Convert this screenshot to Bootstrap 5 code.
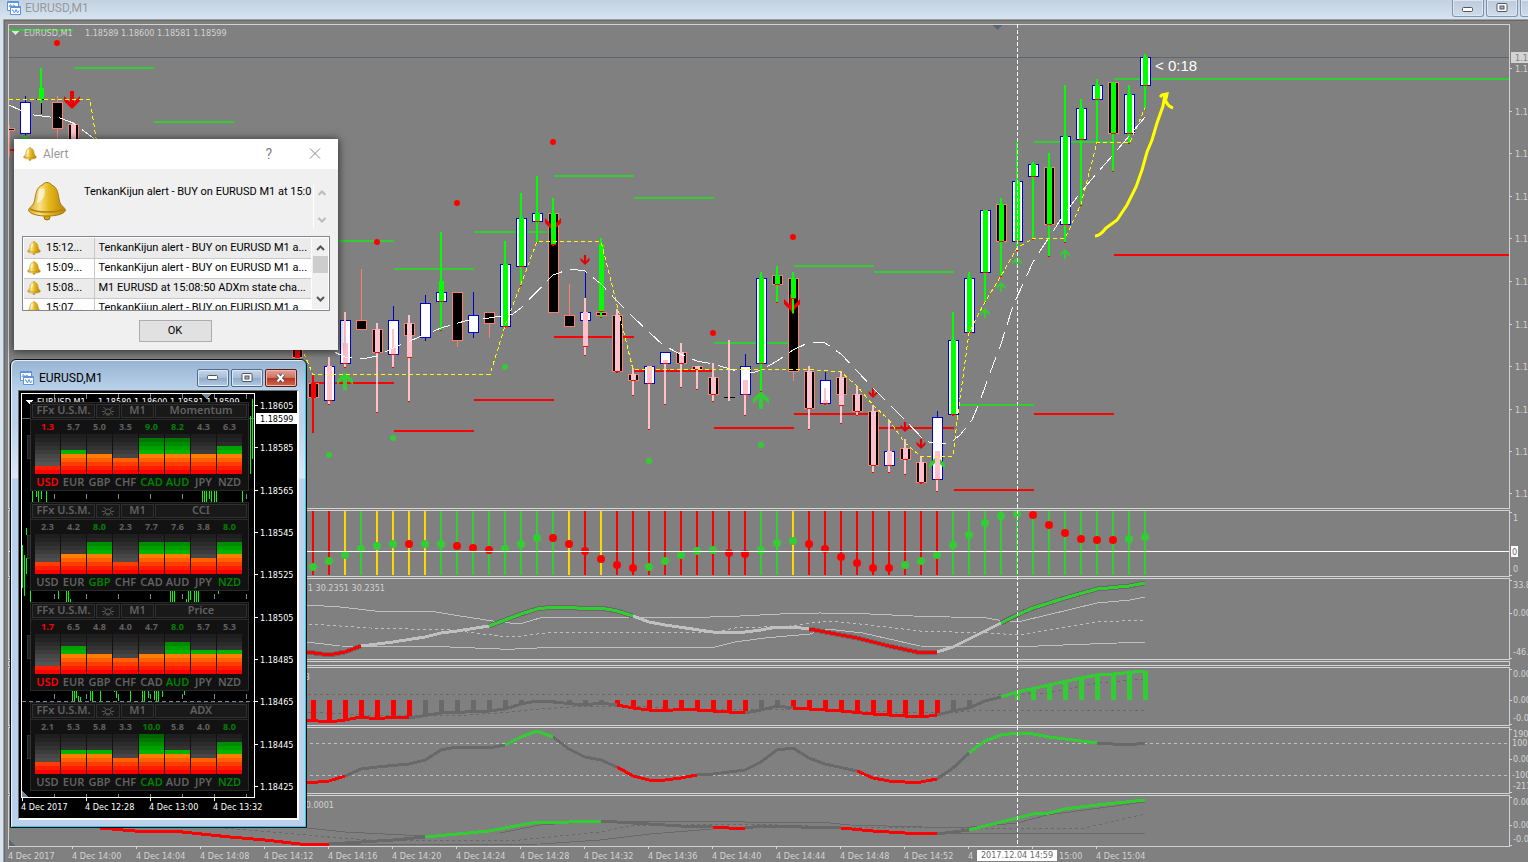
<!DOCTYPE html>
<html lang="en">
<head>
<meta charset="utf-8">
<meta name="viewport" content="width=device-width, initial-scale=1">
<title>EURUSD,M1</title>
<link href="https://cdn.jsdelivr.net/npm/bootstrap@5.3.0/dist/css/bootstrap.min.css" rel="stylesheet">
<style>
body{font-family:Roboto,"Open Sans",sans-serif;font-size:12px;line-height:16px;background:#d6e4f2;overflow:hidden;color:#000}
svg{display:block;flex-shrink:0}
svg text,.tiny{font-family:"DejaVu Sans Condensed","DejaVu Sans",sans-serif;font-size:9px;line-height:12px}
.titlebar{height:20px;background:linear-gradient(#c3d2e0,#d7e4f2);color:#97999c;padding-left:7px}
.titlebar h1,.mini h2{font-size:12px;line-height:16px;font-weight:400;margin:0}
.win-btns{margin-right:-24px;gap:2px}
.wbtn{width:32px;height:17px;padding:0;border:1px solid #8494b0;border-top:0;border-radius:0 0 3px 3px;background:linear-gradient(#bccadb,#cfdcea);box-shadow:inset 0 0 0 1px #dbe6f2;display:flex;align-items:center;justify-content:center}
.client{background:#808080;margin-left:4px;border:1px solid #696969;border-width:1px 0 0 1px;outline:1px solid #a0a0a0;outline-offset:0;padding:3px 0 0 3px;min-height:0}
.pane-row{margin-bottom:1px}
.plotbox{border:1px solid #d3d3d3;min-width:0}
.plotbox svg,.axisbox svg{width:100%;height:100%}
.axisbox{width:18px;flex:none;overflow:hidden}
.h-main{min-height:200px}.h-dots,.h-cci{height:67px}.h-sig{height:82px}.h-thin{height:5px}.h-hist{height:59px}.h-mom{height:52px;margin-bottom:0}
.timeaxis{height:15px;color:#d3d3d3;overflow:hidden}
.timeaxis .tlabel{width:64px;flex:none;border-left:1px solid #d3d3d3;border-image:linear-gradient(#d3d3d3 3px,transparent 3px) 1;white-space:nowrap;padding-top:3px}
.timeaxis .tlabel span{margin-left:-1px}
.timeaxis .part{padding-left:27px}
.crosshair{top:3px;bottom:15px;left:1012px;width:1px;background:repeating-linear-gradient(#fff 0 4px,transparent 4px 6px)}
.crosstag{left:972px;bottom:1px;width:80px;height:11px;line-height:11px;background:#fff;color:#696969;text-align:center}
/* alert dialog */
.alertwin{left:14px;top:139px;width:324px;height:211px;background:#f0f0f0;box-shadow:0 1px 8px 1px rgba(0,0,0,.6);z-index:3}
.alerthead{height:30px;background:#fff;color:#999;padding-left:9px;gap:6px}
.alertwin button{font-size:11px}
.ghost{border:0;background:none;padding:0;color:#808080}
.alertwin .helpbtn{font-size:14px;margin-right:14px}
.tah{font-family:Roboto,"Liberation Sans",sans-serif;font-size:11px;line-height:14px}
.msgicon{margin:-4px 0 0 13px}
.msgtext{margin-left:17px;white-space:nowrap}
.msgscroll{border-left:1px solid #fff;height:43px;width:17px}
.listbox{height:75px;margin:0 8px;border:1px solid #828790;background:#fff;overflow:hidden;padding:1px}
.listbox table{border-collapse:collapse;table-layout:fixed;width:287px}
.listbox td{height:20px;padding:0;border-bottom:1px solid #c8c8c8;white-space:nowrap;overflow:hidden}
.listbox tr:nth-child(odd){background:#ebebeb}
.listbox td:first-child{width:70px;border-right:1px solid #c8c8c8;padding-left:3px}
.listbox td:first-child span{gap:5px}
.listbox td:last-child{padding-left:4px}
.sbar{width:16px;background:#f0f0f0}
.sthumb{height:17px;width:15px;background:#cdcdcd}
.okrow{padding:9px 2px 0 0}
.okbtn{width:73px;height:22px;background:#e1e1e1;border:1px solid #adadad;padding:0}
/* small chart window */
.mini{left:10px;top:359px;width:297px;height:469px;border:1px solid #111;border-radius:6px 6px 0 0;background:linear-gradient(#98b4d2,#b9d1ea 30px,#b9d1ea 60px,#dbe7f5 118px,#b9d1ea 119px,#b9d1ea);box-shadow:inset 1px 1px 0 #e4f0fa,inset -1px -1px 0 #30c8e8;z-index:2;padding:0 7px 7px}
.minihead{height:30px;padding:5px 2px 0;gap:5px}
.mbtns{gap:2px}
.mbtn{width:32px;height:18px;padding:0;border:1px solid #51698a;border-radius:2px;background:linear-gradient(#c5d6e8,#a5bcd6 50%,#8faaca 51%,#b4cbe4);box-shadow:inset 0 0 0 1px #dce8f4;display:flex;align-items:center;justify-content:center}
.mbtn.shut{border-color:#5b1c14;background:linear-gradient(#e0a396,#cf6f5e 50%,#b5331c 51%,#cf6b52);box-shadow:inset 0 0 0 1px #e8b8ac}
.miniclient{background:#000;border:1px solid #696969;border-right:2px solid #fff;border-bottom:2px solid #fff;height:430px;width:281px}
.panels{left:11px;top:11px;width:219px;gap:11px;display:flex;flex-direction:column}
.ffx{height:89px;border:1px solid #2a2a2a;background:#121212;position:relative}
.ffx::before{content:"";position:absolute;left:-4px;top:32px;width:4px;height:24px;background:#1e1e1e;border:1px solid #333}
.ffx{font-family:"Noto Sans",sans-serif;font-size:11px;font-weight:600;line-height:13px;color:#606060}
.fhead{border-bottom:1px solid #2a2a2a;height:17px;padding:1px;gap:1px;display:flex}
.fhead span{border:1px solid #303030;background:#191919;height:14px;line-height:10px;text-align:center;white-space:nowrap}
.f1{width:63px}.f2{width:24px;display:flex;align-items:center;justify-content:center}.f3{width:33px}
.frow{display:flex;gap:1px;padding-left:4px}
.frow>*{width:25px;text-align:center}
.vals{height:14px;font-size:9px;font-weight:700;line-height:14px}
.meter{height:40px;position:relative;background:linear-gradient(#1e1e1e 4px,#232323 4px 8px,#2b2b2b 8px 12px,#333 12px 16px,#3c3c3c 16px 20px,#464646 20px 24px,#4d4d4d 24px 28px,#555 28px 32px,#5f5f5f 32px 36px,#646464 36px)}
.meter i{position:absolute;left:0;right:0;bottom:0;background:linear-gradient(#006400 4px,#007800 4px 8px,#008c00 8px 12px,#00a000 12px 16px,#00b400 16px 20px,#ff7d00 20px 24px,#ff5f00 24px 28px,#ff3c00 28px 32px,#ff1e00 32px 36px,#f00 36px) bottom/100% 40px no-repeat}
.curs span{line-height:15px;white-space:nowrap}
.ffx .lo{color:#f00}.ffx .hi{color:#008000}
</style>
<script src="https://cdn.jsdelivr.net/npm/bootstrap@5.3.0/dist/js/bootstrap.bundle.min.js"></script>
</head>
<body>
<svg width="0" height="0" class="position-absolute" aria-hidden="true">
<defs>
<linearGradient id="gold"><stop offset="0" stop-color="#d9a520"/><stop offset=".3" stop-color="#f7e38a"/><stop offset=".55" stop-color="#e5b91c"/><stop offset="1" stop-color="#b98306"/></linearGradient>
<symbol id="bell" viewBox="0 0 40 40"><circle cx="20" cy="36" r="3" fill="#d9a514" stroke="#9a6c06"/><path d="M20 1.500c-2 0-4 1-4.500 2.500C9 6.500 9 13 7.500 20 6.500 25 1.500 26.500 1.500 29.500c2 4 10 5.500 18.500 5.500s16.500-1.500 18.500-5.500c0-3-5-4.500-6-9.500C31 13 31 6.500 24.500 4 24 2.500 22 1.500 20 1.500Z" fill="url(#gold)" stroke="#a87a10"/><path d="M3 28c7 4 27 4 34 0" fill="none" stroke="#b48510" stroke-width="1.500"/><path d="M13 8c-2 4-2 10-3 14 3-1 5-3 7-6 1-4 1-7 0-9Z" fill="#fff" opacity=".6"/></symbol>
<symbol id="chartico" viewBox="0 0 14 14"><path d="M.500 .500h11v9H.500Z" fill="#fff" stroke="#5d94dd"/><path d="M.500 1h11" stroke="#5d94dd" stroke-width="2"/><path d="M2 6l1.500-2.500L5 6l1.500-2 1.500 1" fill="none" stroke="#5d94dd"/><path d="M3.500 5.500h10v8h-10Z" fill="#fff" stroke="#5d94dd"/><path d="M3.500 6h10" stroke="#5d94dd" stroke-width="2"/><path d="M5 9l1 0 1.500 3 1.500-3.500 1.500 3.500 1.500-2.500" fill="none" stroke="#5d94dd"/></symbol>
<symbol id="sun" viewBox="0 0 14 10"><path d="M4 5.500a3 2.500 0 1 0 6 0 3 2.500 0 1 0-6 0M1 5.500h2.500M10.500 5.500H13M2.500 1l2.500 2.500M11.500 1L9 3.500M2 9l2.500-2M12 9l-2.500-2M5 9h4" fill="none" stroke="#5a5a5a"/></symbol>
<symbol id="minim" viewBox="0 0 12 6"><rect x=".500" y=".500" width="10" height="4" rx="1" fill="#fff" stroke="#505560"/></symbol>
<symbol id="maxim" viewBox="0 0 12 10"><rect x="1" y=".500" width="10" height="8" rx="1" fill="#fff" stroke="#505560"/><rect x="4" y="3" width="4" height="3" fill="#9fb4cc" stroke="#505560"/></symbol>
</defs>
</svg>

<main class="d-flex flex-column vh-100 position-relative">
  <header class="titlebar d-flex justify-content-between flex-shrink-0">
    <div class="d-flex align-items-center"><svg width="14" height="14" class="mb-1"><use href="#chartico"/></svg><h1 class="ms-1 mb-1">EURUSD,M1</h1></div>
    <div class="win-btns d-flex">
      <button class="wbtn" aria-label="Minimize"><svg width="12" height="6" class="mt-1"><use href="#minim"/></svg></button>
      <button class="wbtn" aria-label="Restore"><svg width="12" height="10"><use href="#maxim"/></svg></button>
      <button class="wbtn" aria-label="Close"></button>
    </div>
  </header>

  <section class="client flex-grow-1 d-flex flex-column position-relative">
    <div class="pane-row d-flex flex-grow-1 h-main"><div class="plotbox flex-grow-1"><svg id="p-main"></svg></div><div class="axisbox"><svg id="a-main"></svg></div></div>
    <div class="pane-row d-flex h-dots"><div class="plotbox flex-grow-1"><svg id="p-dots"></svg></div><div class="axisbox"><svg id="a-dots"></svg></div></div>
    <div class="pane-row d-flex h-sig"><div class="plotbox flex-grow-1"><svg id="p-sig"></svg></div><div class="axisbox"><svg id="a-sig"></svg></div></div>
    <div class="pane-row d-flex h-thin"><div class="plotbox flex-grow-1"></div><div class="axisbox"></div></div>
    <div class="pane-row d-flex h-hist"><div class="plotbox flex-grow-1"><svg id="p-hist"></svg></div><div class="axisbox"><svg id="a-hist"></svg></div></div>
    <div class="pane-row d-flex h-cci"><div class="plotbox flex-grow-1"><svg id="p-cci"></svg></div><div class="axisbox"><svg id="a-cci"></svg></div></div>
    <div class="pane-row d-flex h-mom"><div class="plotbox flex-grow-1"><svg id="p-mom"></svg></div><div class="axisbox"><svg id="a-mom"></svg></div></div>
    <div class="timeaxis tiny d-flex" id="times"></div>
    <div class="crosshair position-absolute"></div>
    <div class="crosstag tiny position-absolute">2017.12.04 14:59</div>
  </section>

  <section class="alertwin position-absolute" role="dialog" aria-labelledby="alert-title">
    <div class="alerthead d-flex align-items-center">
      <svg width="14" height="14"><use href="#bell"/></svg><span id="alert-title" class="flex-grow-1">Alert</span>
      <button class="ghost helpbtn" aria-label="Help">?</button>
      <button class="ghost mx-3" aria-label="Close"><svg width="14" height="12" viewBox="0 0 14 12"><path d="M2 .500l10 10M12 .500l-10 10" stroke="#888" fill="none"/></svg></button>
    </div>
    <div class="d-flex pt-3 mb-2">
      <svg width="40" height="40" class="msgicon"><use href="#bell"/></svg>
      <div class="tah msgtext flex-grow-1">TenkanKijun alert - BUY on EURUSD M1 at 15:0</div>
      <div class="msgscroll me-2 d-flex flex-column flex-shrink-0 justify-content-between align-items-center py-1"><svg width="10" height="8"><path d="M1.500 6L5 2.500 8.500 6" fill="none" stroke="#bbb" stroke-width="2"/></svg><svg width="10" height="8"><path d="M1.500 2L5 5.500 8.500 2" fill="none" stroke="#bbb" stroke-width="2"/></svg></div>
    </div>
    <div class="listbox d-flex">
      <table class="tah"><tbody id="alerts"></tbody></table>
      <div class="sbar d-flex flex-column align-items-center justify-content-between py-1 ms-auto">
        <div><svg width="15" height="14"><path d="M4 8L7.500 4.500 11 8" fill="none" stroke="#555" stroke-width="2"/></svg><div class="sthumb"></div></div>
        <svg width="15" height="11"><path d="M4 3L7.500 6.500 11 3" fill="none" stroke="#555" stroke-width="2"/></svg>
      </div>
    </div>
    <div class="text-center okrow"><button class="okbtn tah">OK</button></div>
  </section>

  <section class="mini position-absolute">
    <div class="minihead d-flex align-items-center">
      <svg width="14" height="14"><use href="#chartico"/></svg><h2 class="flex-grow-1">EURUSD,M1</h2>
      <div class="d-flex mbtns">
      <button class="mbtn" aria-label="Minimize"><svg width="12" height="6"><use href="#minim"/></svg></button>
      <button class="mbtn" aria-label="Restore"><svg width="12" height="10"><use href="#maxim"/></svg></button>
      <button class="mbtn shut" aria-label="Close"><svg width="12" height="10"><path d="M2.500 1.500l6 7M8.500 1.500l-6 7" stroke="#505560" stroke-width="4"/><path d="M2.500 1.500l6 7M8.500 1.500l-6 7" stroke="#fff" stroke-width="2"/></svg></button>
      </div>
    </div>
    <div class="miniclient position-relative">
      <svg id="minichart" width="278" height="427"></svg>
      <div class="panels position-absolute" id="panels"></div>
    </div>
  </section>
</main>

<script>
const RED='#ff0000',GRN='#32cd32',LIME='#00ff00',PINK='#ffc0cb',DIM='#696969',SIL='#c0c0c0',AX='#d3d3d3';
const rect=(x,y,w,h,f,s)=>`<rect x="${x}" y="${y}" width="${w}" height="${h}" fill="${f}"${s?` stroke="${s}"`:''}/>`;
const pl=(p,c,w=1,d='')=>`<polyline points="${p}" fill="none" stroke="${c}" stroke-width="${w}"${d?` stroke-dasharray="${d}"`:''}/>`;
const txt=(x,y,t,f=AX,a='start')=>`<text x="${x}" y="${y}" fill="${f}" text-anchor="${a}">${t}</text>`;
const put=(id,x,y,s)=>document.getElementById(id).innerHTML=`<g transform="translate(${-x},${-y})" shape-rendering="crispEdges">${s}</g>`;
const X=i=>25+16*i;

// [x, body style, body top, body bottom, wick top, wick bottom, overlay colour, thick top, thick bottom, thin top, thin bottom]
const candles=[
[9,'k',128,131,125,157],[25,'w',102,134,96,137],[57,'k',102,129,96,139],[73,'k',124,160,124,160,'p',124,160,122,160],
[297,'k',330,358,330,358,'r',330,358,330,358],[313,'k',383,398,383,398,'r',383,398,374,433],
[329,'w',366,401,366,401,'p',366,401,357,405],[345,'w',320,364,320,364,'p',343,364,312,368],[361,'k',320,330,269,330],
[377,'k',329,353,329,353,'p',329,353,323,413],[393,'w',320,355,306,355,'p',348,355,329,368],[409,'k',323,336,323,336,'p',323,358,315,402],
[425,'w',303,338,295,341],[441,'w',292,302,292,302,'g',281,302,232,331],[457,'k',292,341,292,347],[473,'w',315,333,292,338],[489,'k',312,324,312,338],
[505,'w',264,327,264,327,'g',264,327,241,328],[521,'w',218,267,218,267,'g',218,267,193,286],[537,'w',213,222,213,222,'g',213,222,176,243],
[553,'k',213,313,213,313,'g',213,245,198,246],[569,'k',315,327,284,327],[585,'w',312,321,272,321,'p',312,347,298,356],[601,'k',312,316,312,316,'g',244,312,238,318],
[617,'k',315,372,315,372,'p',315,372,309,373],[633,'k',374,381,374,381,'p',374,381,368,396],[649,'w',366,384,366,384,'p',366,384,366,430],
[665,'w',352,364,352,364,'p',360,364,360,405],[681,'k',352,364,352,364,'p',352,364,343,388],[697,'k',366,370,366,370,'p',366,370,366,390],
[713,'k',377,395,377,395,'p',377,395,363,402],[745,'w',366,395,354,395,'p',380,395,380,416],[761,'w',278,364,278,364,'g',278,364,272,392],
[777,'k',275,285,275,285,'g',275,285,266,303],[793,'k',278,372,278,381,'g',278,299,272,314],[809,'k',371,409,371,409,'p',371,409,366,430],
[825,'w',380,404,372,404,'p',400,404,388,405],[841,'k',377,395,377,395,'p',377,406,371,424],[857,'k',394,412,394,412,'p',394,412,386,416],
[873,'k',411,466,411,466,'p',411,466,405,473],[889,'w',451,466,451,466,'p',451,466,420,473],[905,'k',448,460,448,460,'p',448,460,439,475],
[921,'k',462,483,462,483,'p',462,483,456,484],[937,'w',417,480,411,480,'p',451,480,451,492],[953,'w',340,415,340,415,'g',340,415,312,416],
[969,'w',278,333,278,333,'g',278,333,272,333],[985,'w',210,273,210,273,'g',210,273,210,303],[1001,'k',204,242,204,242,'g',204,242,198,277],
[1017,'w',181,242,181,242,'g',181,242,142,251],[1033,'w',164,177,164,177,'g',164,177,162,240],[1049,'k',167,225,167,225,'g',167,225,153,257],
[1065,'w',136,225,136,225,'g',136,225,85,243],[1081,'w',108,140,108,140,'g',108,140,99,206],[1097,'w',85,100,85,100,'g',85,100,79,144],
[1113,'k',82,134,82,134,'g',82,134,82,172],[1129,'w',94,134,94,134,'g',94,134,85,144],[1145,'w',57,86,57,86,'g',57,86,54,110]];
const OV={g:LIME,p:PINK,r:RED};
const levels=[[9,73,30,1],[74,154,68,1],[154,234,122,1],[234,394,241,1],[394,474,269,1],[474,547,232,1],[554,634,176,1],[634,714,198,1],[714,789,343,1],[794,874,266,1],[874,954,272,1],[960,1034,405,1],[1034,1114,142,1],[1114,4000,79,1],
[9,14,150,0],[313,394,383,0],[394,474,431,0],[474,554,400,0],[554,634,337,0],[634,714,371,0],[714,794,428,0],[794,874,414,0],[874,954,428,0],[954,1034,490,0],[1034,1114,414,0],[1114,4000,255,0]];
const arrow=(x,y,c,dir,big)=>{const k=big?1:.56;return `<path transform="translate(${x},${y}) scale(${k},${dir*k})" d="M-2-9h4v11l6-6v5L0 9-8 1v-5l6 6Z" fill="${c}" shape-rendering="auto"/>`};

let s=rect(9,57,4000,1,'#5a6672');
levels.forEach(([a,b,y,g])=>s+=rect(a,y-1,b-a,2,g?GRN:RED));
candles.forEach(([x,t,bt,bb,wt,wb])=>{
  const st=t=='w'?'#0000cd':'#fa8072';
  s+=rect(x,wt,1,wb-wt,st)+rect(x-4.5,bt+.5,10,bb-bt-1,t=='w'?'#fff':'#000',st);
});
[[72,100],[553,222],[792,303]].forEach(p=>s+=arrow(...p,'#f00000',1,1));
[[345,381],[761,400],[937,465],[25,144]].forEach(p=>s+=arrow(...p,GRN,-1,1));
s+=rect(36,99,10,1,'#000')+rect(41,103,1,11,'#000')+rect(40,68,2,35,LIME)+rect(39,88,5,11,LIME);
s+=rect(724,397,11,1,'#000')+rect(728,340,2,61,PINK);
candles.forEach(([x,t,bt,bb,wt,wb,o,kt,kb,nt,nb])=>{
  if(o)s+=rect(x-1,nt,2,nb-nt,OV[o])+rect(x-2,kt,5,kb-kt,OV[o])+rect(x-2,kb-1,5,1,RED)+rect(x-1,nb-1,2,1,RED);
});
[[585,260],[873,393],[905,427],[921,444]].forEach(p=>s+=arrow(...p,'#e60000',1,0));
[[985,313],[1001,287],[1017,262],[1065,254]].forEach(p=>s+=arrow(...p,GRN,-1,0));
[[57,43],[377,242],[457,203],[553,142],[713,333],[793,237]].forEach(([x,y])=>s+=`<circle cx="${x}" cy="${y}" r="3" fill="${RED}" shape-rendering="auto"/>`);
[[329,455],[393,438],[505,367],[649,461],[761,445]].forEach(([x,y])=>s+=`<circle cx="${x}" cy="${y}" r="3" fill="${GRN}" shape-rendering="auto"/>`);
s+=pl('9,99.5 90,99.5 96,138 200,240 303,351 313,374.5 490,374.5 505,326 521,284 537,241.5 601,241.5 617,305 633,369.5 809,369.5 841,372 857,386 873,405 889,420 905,443 921,456.5 953,456.5 958,413 969,333 977,317 985,302 1001,276 1017,248 1033,238.5 1065,238.5 1081,204 1097,142.5 1130,142.5 1145,108','#ffff00',1,'4 3');
s+=pl('9,105 20,110 34,115 50,117 60,118 73,123 92,137 200,240 330,350 345,357 362,359 377,356 393,348 417,338 441,328 465,321 489,318 513,314 521,308 553,275 570,269 585,271 601,284 617,301 633,317 650,333 663,345 680,354 697,361 713,364 737,371 752,373 761,370 777,361 793,350 810,342 825,343 841,354 873,388 905,420 925,441 937,444 950,443 960,435 972,420 980,401 990,373 1001,344 1012,309 1017,297 1033,262 1044,245 1065,213 1081,192 1097,173 1113,155 1129,136 1145,117','#fff',1,'18 8');
s+='<path d="M1095 236q5 0 11-8l11-8 10-15 9-18 6-17 5-18 5-12 5-17 6-17 2-12M1160 97l2-2 5-1-1 5M1165 99q2 7 8 9" fill="none" stroke="#ff0" stroke-width="3" shape-rendering="auto"/>';
s+='<path d="M993 25h9l-4.500 5Z" fill="#5a6672"/><path d="M11 31h8l-4 4Z" fill="#e0e0e0"/>';
s+=txt(24,36,'EURUSD,M1')+txt(85,36,'1.18589 1.18600 1.18581 1.18599')+'<text x="1155" y="71" fill="#fff" style="font:15px \'Liberation Sans\',sans-serif">&lt; 0:18</text>';
put('p-main',9,25,s);

// indicator pane: coloured bars with dots
const bar='rrygyyyyggggggggyryrrrrrrrrrggyrrrrrrrrrggggggggggggg';
const dy=[567,561,555,549,546,544,544,544,544,546,548,550,549,544,538,538,544,551,559,565,568,567,561,555,551,550,553,554,550,543,541,544,549,557,563,568,568,565,561,555,545,535,523,516,514,515,525,533,539,540,540,539,537];
const dc='ggggggrggrrrgggrrrrrrgggggrrgggrrrrrrggggggggrrrrrrgg';
s='';
dy.forEach((y,i)=>{const x=X(i+18);s+=rect(x-1,511,2,64,{r:RED,y:'#ffd700',g:GRN}[bar[i]])+`<circle cx="${x}" cy="${y}" r="4" fill="${dc[i]=='g'?GRN:RED}" shape-rendering="auto"/>`});
put('p-dots',9,511,s+rect(9,551,4000,1,'#fff'));

// trend pane
s=pl('307,605 340,607 375,611 430,611 460,616 493,621 510,623 523,623 540,618 550,617 710,617 740,616 780,614 820,613 870,614 913,616 987,618 1003,621 1018,622 1047,615 1097,603 1130,600 1145,597',SIL)
+pl('307,642 340,646 450,647 500,649 515,649 560,647 715,647 735,642 765,638 810,634 827,629 863,633 920,646 1013,647 1063,645 1145,642',SIL)
+pl('309,624 370,628 450,630 500,636 513,637 545,633 715,632 735,628 790,626 827,621 860,624 920,631 990,633 1018,635 1047,630 1097,622 1145,620',SIL,1,'3 3');
[['307,652 329,655 345,652 361,646',RED],['489,626 521,614 537,609 553,607 569,607 585,609 601,608 617,611 633,616',GRN],['809,629 825,632 857,638 889,646 921,653 937,652',RED],['1001,623 1017,615 1033,608 1065,598 1097,589 1129,586 1145,583',GRN]].forEach(([p,c])=>s+=pl(p,DIM,5)+pl(p,c,3));
['361,646 393,642 425,637 441,633 457,631 489,626','633,616 649,622 665,625 713,632 745,632 761,630 777,627 793,627 809,629','937,652 953,647 969,639 1001,623'].forEach(p=>s+=pl(p,SIL,3));
put('p-sig',9,579,s+txt(385,591,'30.2351 30.2351 30.2351',AX,'end'));

const segs=a=>a.map(([p,c])=>pl(p,c,3)).join('');
// histogram pane
const hist=[['307,720 329,722 345,720 361,717 377,719 393,717 409,718',RED],['409,718 441,713 489,711 505,709 521,704 537,701 553,702 585,705 601,703 617,705',DIM],['617,705 633,708 649,710 665,711 681,709 713,711 729,712 745,713',RED],['745,713 761,710 777,706 793,708',DIM],['793,708 809,709 841,711 873,714 905,716 921,717 937,715',RED],['937,715 953,711 969,708 985,701 1001,697',DIM],['1001,697 1017,692 1049,685 1081,678 1097,675 1113,674 1145,671',GRN]];
s=pl('308,694.5 1018,694.5 1047,693 1097,683 1145,679',DIM,1,'3 3')+pl('308,712 360,715 450,716 500,713 540,709 585,706 633,706 680,709 780,709 860,711 930,713 960,712 980,710 1145,710',DIM,1,'3 3');
const pts=hist.flatMap(h=>h[0].split(' ').map(p=>p.split(',').map(Number)));
for(let i=18;i<=70;i++){const x=X(i);if(x==985||x==1001)continue;
  const k=pts.findIndex(p=>p[0]>=x),b=pts[k],a=pts[Math.max(k-1,0)],y=b[0]==a[0]?b[1]:Math.round(a[1]+(b[1]-a[1])*(x-a[0])/(b[0]-a[0]));
  const c=x>1001?GRN:(x<410||(x>610&&x<750)||(x>790&&x<940))?RED:DIM;
  s+=rect(x-2,Math.min(y,700),5,Math.abs(y-700),c)}
put('p-hist',9,668,s+segs(hist)+txt(310,680,'3',AX,'end'));

put('p-cci',9,728,pl('10,743.5 4000,743.5',SIL,1,'3 3')+pl('10,775.5 4000,775.5',SIL,1,'3 3')+segs([
['307,783 329,781 345,776',RED],['345,776 361,769 377,767 409,764 425,760 441,750 457,747 489,748 505,745',DIM],['505,745 521,737 537,731 553,737',GRN],['553,737 569,749 585,757 601,760 617,767',DIM],['617,767 633,776 649,780 665,780 681,778 697,775',RED],['697,775 713,774 745,770 761,762 777,750 793,748 809,758 825,764 857,771',DIM],['857,771 873,778 889,781 905,782 921,782 937,779',RED],['937,779 953,768 969,753',DIM],['969,753 985,741 1001,735 1017,733 1033,734 1049,737 1081,741 1097,743',GRN],['1097,743 1129,745 1145,743',DIM]]));

put('p-mom',9,796,pl('307,828 345,832 425,836',DIM)+pl('340,845 540,844 600,840 650,834 713,829',DIM)+pl('500,833 540,825 601,821 745,822 820,822 850,825 960,828 1017,823 1047,815 1145,802',DIM)+pl('953,833 1145,833',DIM)
+pl('225,828 340,838 370,840 520,840 600,832 630,826 745,824 840,827 1080,829 1145,814',DIM,1,'3 3')+segs([
['100,828 135,831 173,831 230,837 265,840 300,844 329,844',RED],['329,844 393,840 425,837',DIM],['425,837 457,834 489,831 505,828 521,825 537,822 569,822 601,821',GRN],['601,821 633,823 681,826 713,827',DIM],['713,827 729,828 745,828',RED],['745,828 761,826 841,828',DIM],['841,828 873,831 905,833 937,834',RED],['937,834 969,830',DIM],['969,830 985,826 1001,822 1017,818 1033,814 1049,813 1065,809 1097,805 1145,800',GRN]])
+'<path d="M9 840l6 6H9Z" fill="#5a6672"/>'+txt(334,808,'0.0001',AX,'end'));

// value scales
const scale=(id,top,ticks,labels)=>put(id,1510,top,ticks.map(y=>rect(1510,y,2,1,AX)).join('')+labels.map(([y,t,x=1513])=>txt(x,y+3,t)).join(''));
const py=[68,111,153,196,238,281,324,366,409,451,493];
scale('a-main',24,py,py.map(y=>[y+1,'1.1',1515]));
document.querySelector('#a-main g').innerHTML+=rect(1511,52,17,11,AX)+txt(1515,61,'1.1','#808080');
scale('a-dots',510,[512,575],[[518,'1'],[569,'0']]);
document.querySelector('#a-dots g').innerHTML+=rect(1511,546,7,11,'#fff')+txt(1512,555,'0','#696969');
scale('a-sig',578,[580,613,658],[[585,'33.8'],[613,'0.00'],[652,'-46.']]);
scale('a-hist',667,[669,700,724],[[674,'0.00'],[700,'0.00'],[718,'-0.0']]);
scale('a-cci',727,[729,759,792],[[734,'190'],[743,'100',1512],[759,'0.00'],[775,'-100',1512],[786,'-211']]);
scale('a-mom',795,[797,825,845],[[802,'0.00'],[825,'0.00'],[839,'-0.0']]);

document.getElementById('times').innerHTML=['2017','14:00','14:04','14:08','14:12','14:16','14:20','14:24','14:28','14:32','14:36','14:40','14:44','14:48','14:52'].map(t=>`<div class="tlabel"><span>4 Dec ${t}</span></div>`).join('')
+'<div class="tlabel"><span>4</span></div><div class="tlabel part"><span>15:00</span></div><div class="tlabel"><span>4 Dec 15:04</span></div>';

document.getElementById('alerts').innerHTML=[['15:12...','TenkanKijun alert - BUY on EURUSD M1 a...'],['15:09...','TenkanKijun alert - BUY on EURUSD M1 a...'],['15:08...','M1 EURUSD at 15:08:50 ADXm state cha...'],['15:07...','TenkanKijun alert - BUY on EURUSD M1 a...']].map(([a,b])=>`<tr><td><span class="d-flex align-items-center"><svg width="14" height="14"><use href="#bell"/></svg>${a}</span></td><td>${b}</td></tr>`).join('');

// small window chart
s=rect(21.5,393.5,233,404,'none','#fff')+rect(22,418,232,1,'#5a6672');
[54,86,118,150,182,214,246].forEach(x=>s+=pl(`${x+.5},394 ${x+.5},797`,'#778899',1,'5 5'));
s+=pl('22,701.5 254,701.5','#778899',1,'4 3');
[[32,491,11],[36,491,6],[38,491,11],[41,491,8],[46,491,11],[202,491,11],[204,491,11],[206,491,11],[209,491,8],[211,491,11],[214,491,11],[216,491,11],[242,491,11],[250,416,58],[252,399,60],[26,528,7],[22,545,43],[24,555,41],[26,558,16],
[30,590,12],[58,591,8],[66,590,12],[68,590,12],[70,599,3],[170,590,12],[172,590,12],[174,590,12],[186,599,3],[188,590,12],[190,590,10],[194,590,12],[196,590,12],[198,590,12],[218,590,4],
[72,690,11],[74,690,11],[76,690,8],[78,696,5],[80,697,4],[90,690,11],[92,690,11],[100,690,11],[114,690,2],[116,690,8],[118,697,4],[130,690,11],[142,690,11],[144,690,11],[148,690,8],[154,690,10],[156,690,11],[158,690,11],[162,690,7],[184,690,5]].forEach(([x,y,h])=>s+=rect(x,y,1,h,LIME));
s+='<path d="M202 394h9l-4.500 5Z" fill="#778899"/><path d="M25 400h8l-4 4Z" fill="#fff"/><path d="M22 791l6 6h-6Z" fill="#778899"/>';
s+=txt(37,405,'EURUSD,M1','#fff')+txt(98,405,'1.18589 1.18600 1.18581 1.18599','#fff');
[[405,'05',6],[447,'85'],[490,'65'],[532,'45'],[574,'25'],[617,'05',5],[659,'85',4],[701,'65',4],[744,'45',4],[786,'25',4]].forEach(([y,t,h=5])=>s+=rect(254,y,4,1,'#fff')+txt(260,y+4,'1.18'+h+t,'#fff'));
s+=rect(256,413,41,11,'#fff')+txt(260,422,'1.18599','#000');
['2017','12:28','13:00','13:32'].forEach((t,i)=>s+=rect(22+64*i,798,1,3,'#fff')+txt(21+64*i,810,'4 Dec '+t,'#fff'));
put('minichart',19,391,s);

const cur=['USD','EUR','GBP','CHF','CAD','AUD','JPY','NZD'];
document.getElementById('panels').innerHTML=[['Momentum',[1.3,5.7,5.0,3.5,9.0,8.2,4.3,6.3]],['CCI',[2.3,4.2,8.0,2.3,7.7,7.6,3.8,8.0]],['Price',[1.7,6.5,4.8,4.0,4.7,8.0,5.7,5.3]],['ADX',[2.1,5.3,5.8,3.3,10,5.8,4.0,8.0]]].map(([n,v])=>{
  const k=v.map(a=>a<2?'lo':a>=8?'hi':'');
  return `<div class="ffx"><div class="fhead"><span class="f1">FFx U.S.M.</span><span class="f2"><svg width="14" height="10"><use href="#sun"/></svg></span><span class="f3">M1</span><span class="flex-grow-1">${n}</span></div>
<div class="frow vals">${v.map((a,i)=>`<span class="${k[i]}">${a.toFixed(1)}</span>`).join('')}</div>
<div class="frow">${v.map(a=>`<div class="meter"><i style="height:${Math.ceil(a)*4}px"></i></div>`).join('')}</div>
<div class="frow curs">${cur.map((c,i)=>`<span class="${k[i]}">${c}</span>`).join('')}</div></div>`}).join('');
</script>
</body>
</html>
